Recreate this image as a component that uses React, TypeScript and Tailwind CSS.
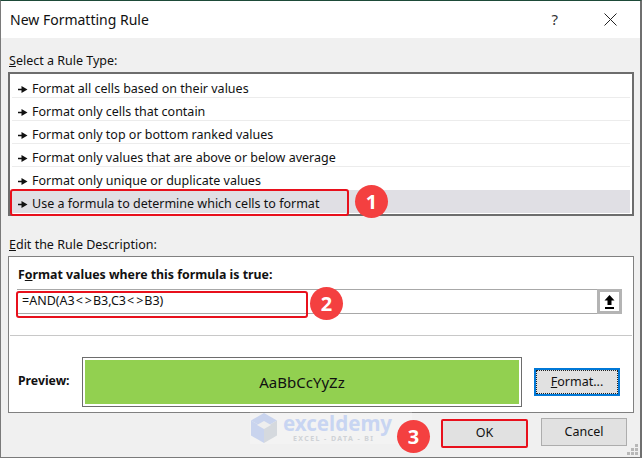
const rules = [
  "Format all cells based on their values",
  "Format only cells that contain",
  "Format only top or bottom ranked values",
  "Format only values that are above or below average",
  "Format only unique or duplicate values",
  "Use a formula to determine which cells to format",
];

function Pointer() {
  return (
    <svg width="10" height="7" viewBox="0 0 10 7" className="mr-[4px] shrink-0">
      <path d="M0 2.75h3.5V0L9.5 3.5 3.5 7V4.25H0z" fill="#111" />
    </svg>
  );
}

function Badge({ n, className }: { n: number; className: string }) {
  return (
    <div
      className={`absolute flex h-[33px] w-[33px] items-center justify-center rounded-full bg-[#f44040] text-[20px] font-bold text-white ${className}`}
    >
      {n}
    </div>
  );
}

function Watermark() {
  return (
    <div className="absolute left-[249px] top-[410px] flex h-[33px] w-[162px] items-center bg-white/20">
      <svg width="28" height="32" viewBox="0 0 28 32" className="shrink-0">
        <path d="M14 1 27 8.5 14 16 1 8.5z" fill="#c9d4ee" />
        <path d="M1 8.5 14 16V31L1 23.5z" fill="#c9d4ee" />
        <path d="M27 8.5V23.5L14 31V16z" fill="#d5d9de" />
        <path d="M14 9 21 13 14 17 7 13z" fill="#eeeeee" />
      </svg>
      <div className="ml-[5px] flex flex-col items-start">
        <span className="text-[20.5px] leading-[22px] font-bold text-[#c8d5f2]">exceldemy</span>
        <span className="ml-[10px] text-[7px] leading-[9px] font-bold tracking-[1.4px] text-[#cfd2d6]">EXCEL - DATA - BI</span>
      </div>
    </div>
  );
}

export default function App() {
  return (
    <div className="relative flex h-[458px] w-[642px] flex-col overflow-hidden border-t border-l border-r-2 border-b border-t-[#1d4a38] border-l-[#7a7a7a] border-r-[#6f6f6f] border-b-[#7a7a7a] bg-[#f0f0f0] font-['Noto_Sans',sans-serif] text-[12.5px] text-[#111]">
      <div className="flex h-[37px] shrink-0 items-center justify-between bg-white pl-[9px] pr-[23px]">
        <span className="text-[14px]">New Formatting Rule</span>
        <div className="flex items-center gap-[46px]">
          <span className="text-[15px] text-[#333]">?</span>
          <svg width="13" height="13" viewBox="0 0 13 13">
            <path d="M.5.5l12 12M12.5.5l-12 12" stroke="#222" strokeWidth="1" fill="none" />
          </svg>
        </div>
      </div>

      <div className="flex flex-1 flex-col px-[7px]">
        <div className="mt-[14px] pl-px leading-[18px]">
          <span className="underline">S</span>elect a Rule Type:
        </div>
        <div className="mt-[2px] h-[144px] w-[626px] border-2 border-[#6d6d6d] bg-white px-[2px] pt-[1px]">
          {rules.map((r, i) => (
            <div
              key={r}
              className={`flex h-[23px] items-center border-b pl-[6px] pt-[6px] ${i === 5 ? "border-transparent bg-[#e0dfe4]" : i === 4 ? "border-transparent" : "border-[#ececec]"}`}
            >
              <Pointer />
              {r}
            </div>
          ))}
        </div>

        <div className="mt-[20px] pl-px leading-[18px]">
          <span className="underline">E</span>dit the Rule Description:
        </div>
        <div className="mt-[2px] flex h-[157px] w-[626px] flex-col border border-[#808080] bg-white">
          <div className="mt-[9px] pl-[9px] text-[12.35px] leading-[18px] font-bold">
            F<span className="underline">o</span>rmat values where this formula is true:
          </div>
          <div className="mt-[5px] ml-[8px] flex h-[25px] w-[605px] items-center justify-between border-y border-[#a8a8a8] pl-[5px]">
            <span>
              =AND(A3<span className="px-[1px]">&lt;</span><span className="px-[1px]">&gt;</span>B3,C3<span className="px-[1px]">&lt;</span><span className="px-[1px]">&gt;</span>B3)
            </span>
            <div className="-my-px flex h-[25px] w-[25px] items-center justify-center border-[3px] border-[#b4b4b4] bg-white">
              <svg width="11" height="14" viewBox="0 0 11 14">
                <path d="M5.5 0 10.5 5.5H7.5V10H3.5V5.5H.5z" fill="#000" />
                <rect x="1" y="12" width="9" height="2" fill="#000" />
              </svg>
            </div>
          </div>
          <div className="mt-[21px] ml-[1px] mr-px h-px bg-[#c8c8c8]" />
          <div className="mt-[21px] flex items-start pl-[9px]">
            <span className="mt-[15px] w-[64px] shrink-0 text-[12.25px] leading-[18px] font-bold">Preview:</span>
            <div className="flex h-[50px] w-[440px] shrink-0 items-center justify-center border border-[#6d6d6d] bg-[#92d050] text-[15px] outline-2 -outline-offset-3 outline-white">
              AaBbCcYyZz
            </div>
            <div className="mt-[11px] ml-[12px] flex h-[28px] w-[86px] items-center justify-center border-2 border-[#0078d7] bg-[#e1e1e1] outline-1 -outline-offset-3 outline-dotted outline-[#222]">
              <span className="underline">F</span>ormat...
            </div>
          </div>
        </div>

        <div className="mt-[5px] flex justify-end pr-[6px]">
          <div className="mt-px flex h-[29px] w-[87px] items-center justify-center rounded-[2px] border-2 border-[#e8101c] bg-[#e1e1e1]">
            OK
          </div>
          <div className="ml-[13px] flex h-[28px] w-[86px] items-center justify-center border border-[#adadad] bg-[#e1e1e1]">
            Cancel
          </div>
        </div>
      </div>

      {/* callouts drawn over the dialog */}
      <Watermark />
      <div className="absolute left-[9px] top-[188px] h-[27px] w-[339px] rounded-[3px] border-2 border-[#e8101c]" />
      <div className="absolute left-[15px] top-[290px] h-[27px] w-[292px] rounded-[3px] border-2 border-[#e8101c]" />
      <Badge n={1} className="left-[354px] top-[184px]" />
      <Badge n={2} className="left-[309px] top-[286px]" />
      <Badge n={3} className="left-[396px] top-[419px]" />

      <svg width="12" height="12" viewBox="0 0 12 12" className="absolute right-[1px] bottom-[1px]">
        <g fill="#b8b8b8">
          <rect x="8" y="0" width="3" height="3" />
          <rect x="4" y="4" width="3" height="3" />
          <rect x="8" y="4" width="3" height="3" />
          <rect x="0" y="8" width="3" height="3" />
          <rect x="4" y="8" width="3" height="3" />
          <rect x="8" y="8" width="3" height="3" />
        </g>
      </svg>
    </div>
  );
}
